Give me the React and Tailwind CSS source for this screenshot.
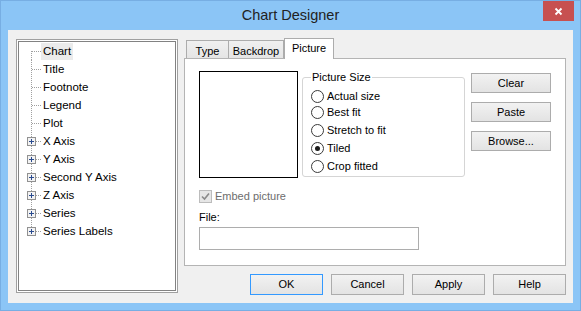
import React from "react";

const treeItems = [
  { label: "Chart", expandable: false, selected: true },
  { label: "Title", expandable: false },
  { label: "Footnote", expandable: false },
  { label: "Legend", expandable: false },
  { label: "Plot", expandable: false },
  { label: "X Axis", expandable: true },
  { label: "Y Axis", expandable: true },
  { label: "Second Y Axis", expandable: true },
  { label: "Z Axis", expandable: true },
  { label: "Series", expandable: true },
  { label: "Series Labels", expandable: true },
];

const sizeOptions = [
  { label: "Actual size", h: "h-[16px]" },
  { label: "Best fit", h: "h-[17px]" },
  { label: "Stretch to fit", h: "h-[18px]" },
  { label: "Tiled", h: "h-[18px]", checked: true },
  { label: "Crop fitted", h: "h-[18px]" },
];

function TreeGutter({ first, last, expandable }) {
  return (
    <svg width="22" height="18" className="shrink-0">
      <line x1="12.5" y1={first ? 9 : 0} x2="12.5" y2={last ? 9 : 18} stroke="#a0a0a0" strokeDasharray="1 1" />
      <line x1={expandable ? 17 : 13} y1="9.5" x2="22" y2="9.5" stroke="#a0a0a0" strokeDasharray="1 1" />
      {expandable && (
        <>
          <rect x="8.5" y="5.5" width="8" height="8" fill="#f3f3f3" stroke="#919191" />
          <path d="M10 9.5h5M12.5 7v5" stroke="#2a4b8f" />
        </>
      )}
    </svg>
  );
}

function Radio({ checked }) {
  return (
    <span className="w-[13px] h-[13px] rounded-full border border-[#3a3a3a] bg-white flex items-center justify-center shrink-0">
      {checked && <span className="w-[5px] h-[5px] rounded-full bg-[#1a1a1a]" />}
    </span>
  );
}

function Button({ children, className = "" }) {
  return (
    <button
      className={`flex items-center justify-center border bg-gradient-to-b from-[#f2f2f2] to-[#e3e3e3] text-black ${className}`}
    >
      {children}
    </button>
  );
}

export default function App() {
  return (
    <div className="w-[581px] h-[311px] flex flex-col bg-[#8bc5f6] border border-[#77aee3] relative font-['Liberation_Sans',sans-serif] text-[11.5px] text-black">
      {/* title bar */}
      <div className="h-[29px] flex items-center justify-center">
        <span className="text-[14.5px] text-[#222] pt-[1px]">Chart Designer</span>
      </div>
      <div className="absolute top-0 right-[6px] w-[31px] h-[20px] bg-[#c75050] flex items-center justify-center">
        <svg width="9" height="9" viewBox="0 0 9 9">
          <path d="M1.5 1.5L7.5 7.5M7.5 1.5L1.5 7.5" stroke="#fff" strokeWidth="1.8" />
        </svg>
      </div>

      {/* client area */}
      <div className="mx-[7px] h-[273px] bg-[#f0f0f0] flex pt-[8px] pl-[8px]">
        {/* tree */}
        <div className="mt-[1px] w-[162px] h-[254px] border border-[#a0a0a0] bg-white p-[1px] shrink-0">
          <div className="w-full h-full border border-[#828282] bg-white flex flex-col">
            {treeItems.map((item, i) => (
              <div key={item.label} className="h-[18px] flex items-center">
                <TreeGutter first={i === 0} last={i === treeItems.length - 1} expandable={item.expandable} />
                <span className={`h-[17px] leading-[17px] px-[2px] ${item.selected ? "bg-[#ebebeb]" : ""}`}>
                  {item.label}
                </span>
              </div>
            ))}
          </div>
        </div>

        {/* right column */}
        <div className="ml-[6px] w-[382px] flex flex-col text-[11px]">
          {/* tabs */}
          <div className="h-[20px] flex items-end pl-[2px]">
            <div className="w-[43px] h-[18px] border border-b-0 border-[#acacac] bg-gradient-to-b from-[#f0f0f0] to-[#e5e5e5] flex items-center justify-center pt-[3px]">
              Type
            </div>
            <div className="w-[55px] h-[18px] border border-l-0 border-b-0 border-[#acacac] bg-gradient-to-b from-[#f0f0f0] to-[#e5e5e5] flex items-center justify-center pt-[3px]">
              Backdrop
            </div>
            <div className="relative z-10 w-[50px] h-[21px] -mb-px border border-b-0 border-[#acacac] bg-white flex items-center justify-center pb-[1px]">
              Picture
            </div>
          </div>

          {/* tab panel */}
          <div className="h-[208px] border border-[#b4b4b4] bg-white px-[14px] flex flex-col">
            <div className="mt-[12px] flex items-start">
              <div className="w-[99px] h-[107px] border border-black bg-white shrink-0" />
              <fieldset className="ml-[4px] w-[165px] border border-[#d5d5d5] rounded-[3px] pl-[8px] pt-[4px] pb-[1px]">
                <legend className="px-[1px] leading-[13px]">Picture Size</legend>
                {sizeOptions.map((opt) => (
                  <div key={opt.label} className={`${opt.h} flex items-center gap-[3px]`}>
                    <Radio checked={opt.checked} />
                    <span>{opt.label}</span>
                  </div>
                ))}
              </fieldset>
              <div className="ml-[6px] mt-[2px] flex flex-col gap-[9px]">
                <Button className="w-[80px] h-[20px] border-[#acacac]">Clear</Button>
                <Button className="w-[80px] h-[20px] border-[#acacac]">Paste</Button>
                <Button className="w-[80px] h-[20px] border-[#acacac]">Browse...</Button>
              </div>
            </div>

            <div className="mt-[12px] h-[13px] flex items-center gap-[3px]">
              <span className="w-[13px] h-[13px] border border-[#bcbcbc] bg-[#e6e6e6] flex items-center justify-center">
                <svg width="9" height="9" viewBox="0 0 9 9">
                  <path d="M1 4.5L3.5 7L8 1.5" fill="none" stroke="#8a8a8a" strokeWidth="1.6" />
                </svg>
              </span>
              <span className="text-[#6d6d6d]">Embed picture</span>
            </div>
            <div className="mt-[8px] leading-[13px]">File:</div>
            <div className="mt-[3px] w-[220px] h-[23px] border border-[#adadad] bg-white" />
          </div>

          {/* dialog buttons */}
          <div className="mt-[8px] flex justify-end gap-[8px]">
            <Button className="w-[73px] h-[21px] border-[#3399ff]">OK</Button>
            <Button className="w-[73px] h-[21px] border-[#acacac]">Cancel</Button>
            <Button className="w-[73px] h-[21px] border-[#acacac]">Apply</Button>
            <Button className="w-[73px] h-[21px] border-[#acacac]">Help</Button>
          </div>
        </div>
      </div>
    </div>
  );
}
